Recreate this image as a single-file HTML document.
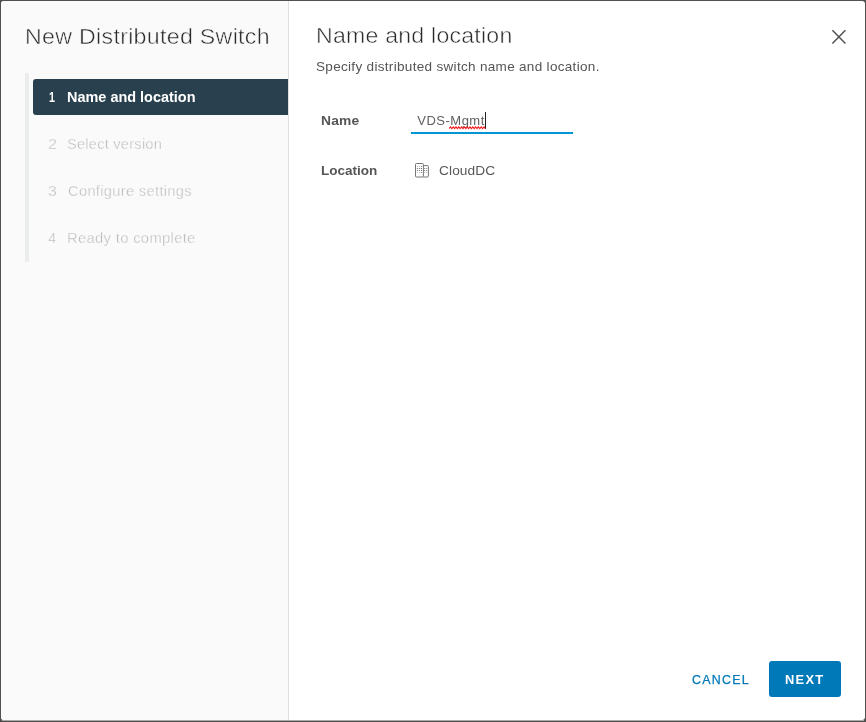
<!DOCTYPE html>
<html lang="en">
<head>
<meta charset="utf-8">
<title>New Distributed Switch</title>
<style>
*{box-sizing:border-box;margin:0;padding:0}
html,body{width:866px;height:722px;overflow:hidden;background:#50504e;font-family:"Liberation Sans",sans-serif;}
.dialog{will-change:transform;position:absolute;left:1px;top:1px;width:864px;height:719px;background:#fff;border-radius:3px;overflow:hidden}
.side{position:absolute;left:0;top:0;width:287px;height:100%;background:#fafafa;border-right:1px solid #e0e0e0;box-sizing:content-box}
.t{position:absolute;white-space:nowrap;line-height:1}
.bar{position:absolute;left:24px;top:72px;width:4px;height:189px;background:#ebeded}
.active{position:absolute;left:32px;top:78px;width:255px;height:36px;background:#29414e;border-radius:3px 0 0 3px}
</style>
</head>
<body>
<div style="position:absolute;left:2px;top:720px;width:862px;height:1px;background:#a9a9a8"></div>
<div class="dialog">
  <div class="side">
    <div class="t" id="title1" style="left:23.69px;top:24.98px;font-size:22.6px;color:#2a2a2a;letter-spacing:0.3px;transform:scaleX(1.0253);transform-origin:0 0;-webkit-text-stroke:0.5px #fafafa">New Distributed Switch</div>
    <div class="bar"></div>
    <div class="active"></div>
    <div class="t" id="n1" style="left:48.0px;top:89.15px;font-size:14px;color:#fff;font-weight:bold;transform:scaleX(0.7673);transform-origin:0 0">1</div>
    <div class="t" id="s1" style="left:66.22px;top:89.15px;font-size:14px;color:#fff;font-weight:bold;letter-spacing:0px;transform:scaleX(1.0326);transform-origin:0 0">Name and location</div>
    <div class="t" id="n2" style="left:46.92px;top:136.15px;font-size:14px;color:#bcbcbc;transform:scaleX(1.1613);transform-origin:0 0;-webkit-text-stroke:0.3px #fafafa">2</div>
    <div class="t" id="s2" style="left:66.20px;top:136.15px;font-size:14px;color:#bcbcbc;letter-spacing:0.2px;transform:scaleX(1.0480);transform-origin:0 0;-webkit-text-stroke:0.3px #fafafa">Select version</div>
    <div class="t" id="n3" style="left:46.95px;top:183.15px;font-size:14px;color:#bcbcbc;transform:scaleX(1.14);transform-origin:0 0;-webkit-text-stroke:0.3px #fafafa">3</div>
    <div class="t" id="s3" style="left:66.65px;top:183.15px;font-size:14px;color:#bcbcbc;letter-spacing:0.3px;transform:scaleX(1.0484);transform-origin:0 0;-webkit-text-stroke:0.3px #fafafa">Configure settings</div>
    <div class="t" id="n4" style="left:47.3px;top:230.15px;font-size:14px;color:#bcbcbc;transform:scaleX(1.0);transform-origin:0 0;-webkit-text-stroke:0.3px #fafafa">4</div>
    <div class="t" id="s4" style="left:66.26px;top:230.15px;font-size:14px;color:#bcbcbc;letter-spacing:0.3px;transform:scaleX(1.0560);transform-origin:0 0;-webkit-text-stroke:0.3px #fafafa">Ready to complete</div>
  </div>
  <div class="t" id="title2" style="left:315.0px;top:23.88px;font-size:22.6px;color:#2a2a2a;letter-spacing:0.2px;transform:scaleX(1.0243);transform-origin:0 0;-webkit-text-stroke:0.5px #fff">Name and location</div>
  <div class="t" id="sub" style="left:315.25px;top:58.75px;font-size:13px;color:#555;letter-spacing:0.3px;transform:scaleX(1.0396);transform-origin:0 0">Specify distributed switch name and location.</div>
  <div class="t" id="lname" style="left:320.18px;top:113.20px;font-size:13px;color:#555;font-weight:bold;letter-spacing:0.2px;transform:scaleX(1.0622);transform-origin:0 0">Name</div>
  <div class="t" id="vname" style="left:416.3px;top:112.75px;font-size:13px;color:#606060;letter-spacing:0.49px">VDS-Mgmt</div>
  <div class="t" id="lloc" style="left:320.20px;top:163.00px;font-size:13px;color:#555;font-weight:bold;letter-spacing:0px;transform:scaleX(1.0397);transform-origin:0 0">Location</div>
  <div class="t" id="vloc" style="left:437.77px;top:163.00px;font-size:13px;color:#585858;letter-spacing:0.1px;transform:scaleX(1.0523);transform-origin:0 0">CloudDC</div>
  <div id="uline" style="position:absolute;left:410px;top:131px;width:162px;height:2px;background:#0095d3"></div>
  <div id="cursor" style="position:absolute;left:484.4px;top:111px;width:1px;height:16.7px;background:#222"></div>
  <svg id="squig" style="position:absolute;left:448.3px;top:125px" width="37" height="4" viewBox="0 0 37 4"><path d="M0 2.6 L1.4 0.9 L2.8 2.6 L4.2 0.9 L5.6 2.6 L7.0 0.9 L8.4 2.6 L9.8 0.9 L11.2 2.6 L12.6 0.9 L14.0 2.6 L15.4 0.9 L16.8 2.6 L18.2 0.9 L19.6 2.6 L21.0 0.9 L22.4 2.6 L23.8 0.9 L25.2 2.6 L26.6 0.9 L28.0 2.6 L29.4 0.9 L30.8 2.6 L32.2 0.9 L33.6 2.6 L35.0 0.9 L36.4 2.6" fill="none" stroke="#f41a1a" stroke-width="1.1"/></svg>
  <svg id="dcicon" style="position:absolute;left:413px;top:161px" width="17" height="17" viewBox="0 0 17 17">
    <rect x="1.5" y="1.5" width="7.9" height="13.5" rx="0.9" fill="#fff" stroke="#6e6e6e" stroke-width="0.95"/>
    <path d="M9.4 3.6 H13.5 Q14.4 3.6 14.4 4.5 V14.1 Q14.4 15 13.5 15 H9.4" fill="none" stroke="#6e6e6e" stroke-width="0.95"/>
    <g fill="#555">
      <rect x="2.9" y="4" width="1" height="1" opacity=".4"/><rect x="4.9" y="4" width="1" height="1" opacity=".4"/><rect x="6.9" y="4" width="1" height="1" opacity=".8"/>
      <rect x="2.9" y="6" width="1" height="1" opacity=".8"/><rect x="4.9" y="6" width="1" height="1" opacity=".8"/><rect x="6.9" y="6" width="1" height="1"/>
      <rect x="2.9" y="8" width="1" height="1" opacity=".8"/><rect x="4.9" y="8" width="1" height="1" opacity=".8"/><rect x="6.9" y="8" width="1" height="1"/>
      <rect x="2.9" y="10" width="1" height="1" opacity=".4"/><rect x="4.9" y="10" width="1" height="1" opacity=".4"/><rect x="6.9" y="10" width="1" height="1" opacity=".8"/>
      <rect x="10.2" y="6" width="1" height="1" opacity=".8"/><rect x="12.1" y="6" width="1" height="1" opacity=".7"/>
      <rect x="10.2" y="8" width="1" height="1" opacity=".8"/><rect x="12.1" y="8" width="1" height="1" opacity=".7"/>
      <rect x="10.2" y="10" width="1" height="1" opacity=".4"/><rect x="12.1" y="10" width="1" height="1" opacity=".4"/>
    </g>
  </svg>
  <svg id="closex" style="position:absolute;left:829px;top:27px" width="18" height="18" viewBox="0 0 18 18"><path d="M2.4 2.2 L15.4 15.6 M15.4 2.2 L2.4 15.6" fill="none" stroke="#505050" stroke-width="1.45"/></svg>
  <div class="t" id="cancel" style="left:690.55px;top:672.74px;font-size:12px;color:#0079b8;letter-spacing:1.2px;transform:scaleX(1.0356);transform-origin:0 0;-webkit-text-stroke:0.25px #0079b8">CANCEL</div>
  <div id="nextbtn" style="position:absolute;left:768px;top:660px;width:72px;height:36px;background:#0079b8;border-radius:3px"></div>
  <div class="t" id="next" style="left:784.21px;top:672.74px;font-size:12px;color:#fff;font-weight:bold;letter-spacing:1.2px;transform:scaleX(1.0729);transform-origin:0 0">NEXT</div>
</div>
</body>
</html>
